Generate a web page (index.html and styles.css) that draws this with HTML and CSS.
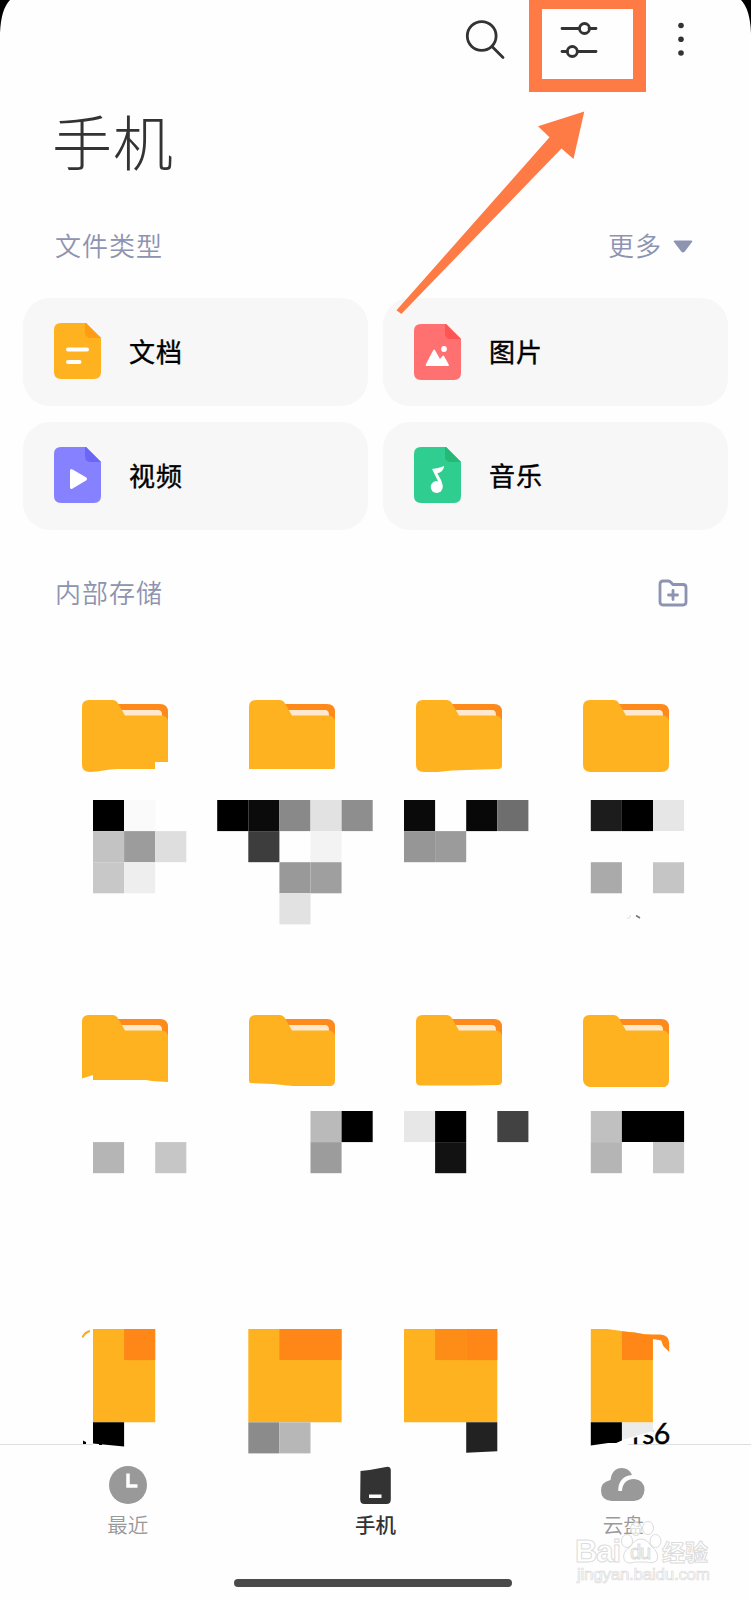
FILE: index.html
```html
<!DOCTYPE html>
<html lang="zh-CN">
<head>
    <meta charset="UTF-8">
    <meta name="viewport" content="width=device-width, initial-scale=1.0">
    <title>手机</title>
    <link rel="stylesheet" href="styles.css">
</head>
<body>
    <!-- Shared shapes -->
    <svg class="defs" width="0" height="0">
        <symbol id="sheet" viewBox="0 0 47 56">
            <path fill="currentColor" d="M7 0H32L47 15V49Q47 56 40 56H7Q0 56 0 49V7Q0 0 7 0Z"/>
        </symbol>
        <symbol id="folder-back" viewBox="0 0 86 72">
            <path fill="#fd8a1b" d="M30 4H78Q86 4 86 12V24H30Z"/>
            <path fill="#ffe8cc" d="M36 10H76Q80 10 80 15V18H36Z"/>
        </symbol>
    </svg>

    <div class="phone">
        <header class="toolbar">
            <svg class="search" width="42" height="42" viewBox="0 0 42 42">
                <circle cx="18.7" cy="18" r="14.4"/>
                <path d="M29 28.5L40 39.5"/>
            </svg>
            <svg class="sliders" width="37" height="36" viewBox="0 0 37 36">
                <path d="M2 7.5H19M29 7.5H36M2 30.5H7.5M17.500 30.5H36"/>
                <circle cx="24.5" cy="7.5" r="5"/>
                <circle cx="12.3" cy="30.5" r="5"/>
            </svg>
            <svg class="dots" width="6" height="34" viewBox="0 0 6 34">
                <circle cx="3" cy="3.5" r="2.8"/>
                <circle cx="3" cy="17.2" r="2.8"/>
                <circle cx="3" cy="31" r="2.8"/>
            </svg>
        </header>

        <h1>手机</h1>

        <!-- File types -->
        <div class="section-head">
            <span>文件类型</span>
            <span class="more"><span>更多</span>
                <svg width="20" height="13" viewBox="0 0 20 13"><path d="M2 .5H18Q20 .5 19 2L11.800 11.500Q10 13.300 8.200 11.500L1 2Q0 .5 2 .5Z"/></svg>
            </span>
        </div>
        <div class="types">
            <div class="card">
                <svg class="doc" width="47" height="56" viewBox="0 0 47 56">
                    <use href="#sheet"/>
                    <path fill="#ff9c14" d="M32 0L47 15H37Q31 15 31 9V0Z"/>
                    <path class="line" d="M14 26.500H33M14 39H25.500"/>
                </svg>
                <span>文档</span>
            </div>
            <div class="card">
                <svg class="pic" width="47" height="56" viewBox="0 0 47 56">
                    <use href="#sheet"/>
                    <path fill="#ff5454" d="M32 0L47 15H37Q31 15 31 9V0Z"/>
                    <path fill="#fff" d="M12.500 42Q11 42 12 40L19 26.500Q20 24.500 21.200 26.500L26 35L28.500 32Q29.500 31 30.300 32.500L35 41Q35.300 42 34 42Z"/>
                    <circle fill="#fff" cx="30" cy="25" r="2.900"/>
                </svg>
                <span>图片</span>
            </div>
            <div class="card">
                <svg class="video" width="47" height="56" viewBox="0 0 47 56">
                    <use href="#sheet"/>
                    <path fill="#6c66f5" d="M32 0L47 15H37Q31 15 31 9V0Z"/>
                    <path fill="#fff" d="M16 24Q16 21 18.600 22.500L32 30.300Q34 32 32 33.500L18.600 41.500Q16 43 16 40Z"/>
                </svg>
                <span>视频</span>
            </div>
            <div class="card">
                <svg class="music" width="47" height="56" viewBox="0 0 47 56">
                    <use href="#sheet"/>
                    <path fill="#26b876" d="M32 0L47 15H37Q31 15 31 9V0Z"/>
                    <circle fill="#fff" cx="22.700" cy="40" r="6"/>
                    <path fill="#fff" d="M30.300 19Q24 21.500 18 22L25 36L28.700 40Q28.500 36 27 33L23.300 26.200Q29 25.500 30.300 19Z"/>
                </svg>
                <span>音乐</span>
            </div>
        </div>

        <!-- Internal storage -->
        <div class="section-head storage">
            <span>内部存储</span>
            <svg class="new-folder" width="30" height="28" viewBox="0 0 30 28">
                <path d="M5 2H10Q12 2 13 3.500L15 5.500H25Q28 5.500 28 8.500V23Q28 26 25 26H5Q2 26 2 23V5Q2 2 5 2ZM15 11.500V20.500M10.500 16H19.500"/>
            </svg>
        </div>

        <div class="folders">
            <div class="item">
                <svg class="folder" width="86" height="72" viewBox="0 0 86 72">
                    <use href="#folder-back"/>
                    <path d="M7 0H31Q34 0 35.500 2.500L43 15.500H79Q85 15.500 86 21V62H73V69H36C25 69 18 72 8 72Q0 72 0 65V7Q0 0 7 0Z"/>
                </svg>
                <svg class="mosaic" width="167" height="124">
                    <g transform="translate(51) scale(31.1)">
                        <path fill="#000" d="M0 0h1v1h-1z"/>
                        <path fill="#fafafa" d="M1 0h1v1h-1z"/>
                        <path fill="#c3c3c3" d="M0 1h1v1h-1z"/>
                        <path fill="#9c9c9c" d="M1 1h1v1h-1z"/>
                        <path fill="#dedede" d="M2 1h1v1h-1z"/>
                        <path fill="#c8c8c8" d="M0 2h1v1h-1z"/>
                        <path fill="#eee" d="M1 2h1v1h-1z"/>
                    </g>
                </svg>
            </div>
            <div class="item">
                <svg class="folder" width="86" height="72" viewBox="0 0 86 72">
                    <use href="#folder-back"/>
                    <path d="M7 0H31Q34 0 35.500 2.500L43 15.500H79Q85 15.500 86 21V67L85 69H0V7Q0 0 7 0Z"/>
                </svg>
                <svg class="mosaic" width="167" height="124">
                    <g transform="translate(8.2) scale(31.1)">
                        <path fill="#000" d="M0 0h1v1h-1z"/>
                        <path fill="#0b0b0b" d="M1 0h1v1h-1z"/>
                        <path fill="#898989" d="M2 0h1v1h-1z"/>
                        <path fill="#e2e2e2" d="M3 0h1v1h-1z"/>
                        <path fill="#8e8e8e" d="M4 0h1v1h-1z"/>
                        <path fill="#3d3d3d" d="M1 1h1v1h-1z"/>
                        <path fill="#f3f3f3" d="M3 1h1v1h-1z"/>
                        <path fill="#999" d="M2 2h1v1h-1z"/>
                        <path fill="#9f9f9f" d="M3 2h1v1h-1z"/>
                        <path fill="#e2e2e2" d="M2 3h1v1h-1z"/>
                    </g>
                </svg>
            </div>
            <div class="item">
                <svg class="folder" width="86" height="72" viewBox="0 0 86 72">
                    <use href="#folder-back"/>
                    <path d="M7 0H31Q34 0 35.500 2.500L43 15.500H79Q85 15.500 86 21V66Q86 69 82 69C60 70 40 69.500 22 72H8Q0 72 0 65V7Q0 0 7 0Z"/>
                </svg>
                <svg class="mosaic" width="167" height="124">
                    <g transform="translate(28) scale(31.1)">
                        <path fill="#0a0a0a" d="M0 0h1v1h-1z"/>
                        <path fill="#080808" d="M2 0h1v1h-1z"/>
                        <path fill="#6e6e6e" d="M3 0h1v1h-1z"/>
                        <path fill="#969696" d="M0 1h1v1h-1z"/>
                        <path fill="#9b9b9b" d="M1 1h1v1h-1z"/>
                    </g>
                </svg>
            </div>
            <div class="item">
                <svg class="folder" width="86" height="72" viewBox="0 0 86 72">
                    <use href="#folder-back"/>
                    <path d="M7 0H31Q34 0 35.500 2.500L43 15.500H79Q85 15.500 86 21V65Q86 72 78 72H8Q0 72 0 65V7Q0 0 7 0Z"/>
                </svg>
                <svg class="mosaic" width="167" height="124">
                    <g transform="translate(47.8) scale(31.1)">
                        <path fill="#1c1c1c" d="M0 0h1v1h-1z"/>
                        <path fill="#000" d="M1 0h1v1h-1z"/>
                        <path fill="#e6e6e6" d="M2 0h1v1h-1z"/>
                        <path fill="#aaa" d="M0 2h1v1h-1z"/>
                        <path fill="#c5c5c5" d="M2 2h1v1h-1z"/>
                    </g>
                    <path class="scratch" d="M93 115.500L97 118"/>
                    <path class="scratch faint" d="M84 118Q88 119 87 115"/>
                </svg>
            </div>

            <div class="item">
                <svg class="folder" width="86" height="72" viewBox="0 0 86 72">
                    <use href="#folder-back"/>
                    <path d="M7 0H31Q34 0 35.500 2.500L43 15.500H79Q85 15.500 86 21V67L70 66L64 65H11V60L0 63.500V7Q0 0 7 0Z"/>
                </svg>
                <svg class="mosaic" width="167" height="124">
                    <g transform="translate(51) scale(31.1)">
                        <path fill="#b5b5b5" d="M0 1h1v1h-1z"/>
                        <path fill="#c6c6c6" d="M2 1h1v1h-1z"/>
                    </g>
                </svg>
            </div>
            <div class="item">
                <svg class="folder" width="86" height="72" viewBox="0 0 86 72">
                    <use href="#folder-back"/>
                    <path d="M7 0H31Q34 0 35.500 2.500L43 15.500H79Q85 15.500 86 21V65Q86 71 81 71H44L24 69L1 68L0 66V7Q0 0 7 0Z"/>
                </svg>
                <svg class="mosaic" width="167" height="124">
                    <g transform="translate(8.2) scale(31.1)">
                        <path fill="#bababa" d="M3 0h1v1h-1z"/>
                        <path fill="#000" d="M4 0h1v1h-1z"/>
                        <path fill="#9c9c9c" d="M3 1h1v1h-1z"/>
                    </g>
                </svg>
            </div>
            <div class="item">
                <svg class="folder" width="86" height="72" viewBox="0 0 86 72">
                    <use href="#folder-back"/>
                    <path d="M7 0H31Q34 0 35.500 2.500L43 15.500H79Q85 15.500 86 21V66Q86 70 82 70L56 70.500H4Q0 70 0 66V7Q0 0 7 0Z"/>
                </svg>
                <svg class="mosaic" width="167" height="124">
                    <g transform="translate(28) scale(31.1)">
                        <path fill="#e7e7e7" d="M0 0h1v1h-1z"/>
                        <path fill="#000" d="M1 0h1v1h-1z"/>
                        <path fill="#424242" d="M3 0h1v1h-1z"/>
                        <path fill="#121212" d="M1 1h1v1h-1z"/>
                    </g>
                </svg>
            </div>
            <div class="item">
                <svg class="folder" width="86" height="72" viewBox="0 0 86 72">
                    <use href="#folder-back"/>
                    <path d="M7 0H31Q34 0 35.500 2.500L43 15.500H79Q85 15.500 86 21V65Q86 72.500 78 72.500H10Q0 72 0 64V7Q0 0 7 0Z"/>
                </svg>
                <svg class="mosaic" width="167" height="124">
                    <g transform="translate(47.8) scale(31.1)">
                        <path fill="#c0c0c0" d="M0 0h1v1h-1z"/>
                        <path fill="#000" d="M1 0h2v1h-2z"/>
                        <path fill="#b5b5b5" d="M0 1h1v1h-1z"/>
                        <path fill="#c6c6c6" d="M2 1h1v1h-1z"/>
                    </g>
                </svg>
            </div>

            <!-- Last row runs under the tab bar -->
            <div class="item">
                <svg class="mosaic" width="167" height="115">
                    <path fill="none" stroke="#f5ac22" stroke-width="2" d="M40.500 8.500Q42.500 3.500 48 2"/>
                    <g transform="translate(51) scale(31.1)">
                        <path fill="#ffb21f" d="M0 0h2v3h-2z"/>
                        <path fill="#ff8717" d="M1 0h1v1h-1z"/>
                        <path fill="#000" d="M0 3h1v.780L0 3.680z"/>
                    </g>
                    <path fill="#000" d="M41 111.500L44 113V115H41ZM57 113H60V116H57Z"/>
                </svg>
            </div>
            <div class="item">
                <svg class="mosaic" width="167" height="115">
                    <g transform="translate(39.3) scale(31.1)">
                        <path fill="#ffb21f" d="M0 0h3v3h-3z"/>
                        <path fill="#ff8717" d="M1 0h2v1h-2z"/>
                        <path fill="#8b8b8b" d="M0 3h1v1h-1z"/>
                        <path fill="#b7b7b7" d="M1 3h1v1h-1z"/>
                    </g>
                </svg>
            </div>
            <div class="item">
                <svg class="mosaic" width="167" height="115">
                    <g transform="translate(28) scale(31.1)">
                        <path fill="#ffb21f" d="M0 0h3v3h-3z"/>
                        <path fill="#fd8d16" d="M1 0h1v1h-1z"/>
                        <path fill="#ff8717" d="M2 0h1v1h-1z"/>
                        <path fill="#222" d="M2 3h1v.930L2 3.980z"/>
                    </g>
                </svg>
            </div>
            <div class="item">
                <svg class="mosaic" width="167" height="115">
                    <g transform="translate(-.8)">
                        <text x="90" y="114.500" textLength="38">rs6</text>
                        <path fill="#fefefe" d="M80 90H110.700V104L79.700 112Z"/>
                        <path fill="#ebebeb" d="M79.700 93.300H110.700V102L79.700 111Z"/>
                        <path fill="#ffb21f" d="M48.600 0H65L79.700 2L102 5L110.700 6V93.300H48.600Z"/>
                        <path fill="#ff8717" d="M79.700 2.500L93 3.500L102 5.500H118Q127 6 127 14V23L121 17L119 11.500L110.700 10V31H79.700Z"/>
                        <path fill="#000" d="M48.600 93.300H79.700V111.500L74 114H66L48.600 116.500Z"/>
                    </g>
                </svg>
            </div>
        </div>

        <nav class="tabs">
            <div class="tab">
                <svg width="44" height="38" viewBox="0 0 44 38">
                    <circle fill="#999" cx="22" cy="19" r="19"/>
                    <path class="hands" d="M22 7.500V20H31.500"/>
                </svg>
                <span>最近</span>
            </div>
            <div class="tab active">
                <svg width="44" height="38" viewBox="0 0 44 38">
                    <path fill="#333" d="M7.500 5L16.500 4L34.500 .7Q37.500 .7 37.800 4V33.500Q37.800 38 33.500 38H11.500Q7.200 38 7.200 33.500Z"/>
                    <path fill="#fff" d="M16 28.500H28.500V32H16Z"/>
                </svg>
                <span>手机</span>
            </div>
            <div class="tab">
                <svg width="44" height="38" viewBox="0 0 44 38">
                    <path fill="#999" d="M10.500 35Q0 34 0 24.500Q0 16 9.500 14Q11 2 21 2Q28 2 31 9Q24 9.500 20.500 14Q17 18 17.300 25H21C21.500 17 26 13 33 13Q43.500 14 43.500 24Q43 34 33 35Z"/>
                </svg>
                <span>云盘</span>
            </div>
        </nav>
        <div class="home-bar"></div>

        <!-- Screen corners -->
        <svg class="corner left" width="10" height="34" viewBox="0 0 10 34"><path d="M0 0H10Q1 9 0 33Z"/></svg>
        <svg class="corner right" width="10" height="34" viewBox="0 0 10 34"><path d="M10 0H0Q9 9 10 33Z"/></svg>

        <!-- Highlight box and arrow -->
        <div class="highlight"></div>
        <svg class="arrow" width="190" height="204" viewBox="0 0 190 204">
            <path d="M188.300 1.500L142 16.300L153.500 27.300L.5 200.300L5.300 204L165.500 38.500L177.500 49Z"/>
        </svg>

        <!-- Watermark -->
        <svg class="watermark" width="142" height="72" viewBox="0 0 142 72">
            <g class="paw">
                <ellipse cx="57" cy="28" rx="5.500" ry="6.500"/>
                <ellipse cx="66" cy="16" rx="5.500" ry="6.500"/>
                <ellipse cx="78" cy="15" rx="5.500" ry="6.500"/>
                <ellipse cx="85.500" cy="28" rx="5.500" ry="6.500"/>
                <path d="M71 26Q77 26 81 33Q90 40 87 47Q84 51 76 49H65Q56 52 54 46Q52 39 60 34Q65 26 71 26Z"/>
            </g>
            <text class="latin" x="5" y="49" textLength="46">Bai</text>
            <text class="du" x="60" y="46" textLength="21">du</text>
            <text class="cjk" x="92" y="48" textLength="46">经验</text>
            <text class="url" x="7" y="67" textLength="133">jingyan.baidu.com</text>
        </svg>
    </div>
</body>
</html>
```

FILE: styles.css
```css
* {
    box-sizing: border-box;
}
body {
    margin: 0;
    background-color: #fefefe;
    font-family: "Noto Sans CJK SC", sans-serif;
    color: #000;
}
.defs {
    position: absolute;
}
.phone {
    position: relative;
    width: 751px;
    height: 1600px;
    overflow: hidden;
}

/* Toolbar */
.toolbar {
    display: flex;
    justify-content: flex-end;
    align-items: center;
    height: 78px;
    padding-right: 67px;
}
.search,
.sliders {
    overflow: visible;
    fill: none;
    stroke: #333;
    stroke-width: 2.8;
    stroke-linecap: round;
}
.search {
    margin-right: 55px;
}
.sliders {
    margin-right: 81px;
}
.dots {
    fill: #333;
}
h1 {
    margin: 0;
    padding-left: 52px;
    height: 128px;
    line-height: 124px;
    font-size: 60px;
    font-weight: 300;
    letter-spacing: 1px;
    color: #333;
}

/* Section titles */
.section-head {
    display: flex;
    justify-content: space-between;
    align-items: center;
    height: 76px;
    padding: 0 58px 0 55px;
    font-size: 26px;
    font-weight: 350;
    letter-spacing: 1px;
    color: #8d93b0;
}
.more {
    display: flex;
    align-items: center;
    gap: 11px;
}
.more svg {
    margin-top: 5px;
    fill: #8d93b0;
}
.storage {
    margin-top: 23px;
    padding-right: 63px;
}
.new-folder {
    margin-top: 3px;
    fill: none;
    stroke: #8d93b0;
    stroke-width: 2.8;
    stroke-linecap: round;
}

/* File type cards */
.types {
    display: grid;
    grid-template-columns: 1fr 1fr;
    gap: 16px 15px;
    margin-top: 16px;
    padding: 0 23px;
}
.card {
    display: flex;
    align-items: center;
    gap: 28px;
    height: 108px;
    padding: 0 0 3px 31px;
    border-radius: 27px;
    background-color: #f7f7f7;
    font-size: 26px;
    letter-spacing: 1px;
    -webkit-text-stroke: 0.4px #000;
}
.doc {
    color: #ffb21f;
}
.pic {
    margin-top: 2px;
    color: #ff7070;
}
.video {
    color: #8581ff;
}
.music {
    color: #2fcd8f;
}
.line,
.hands {
    fill: none;
    stroke: #fff;
    stroke-width: 4;
}
.line {
    stroke-linecap: round;
}
.hands {
    stroke-width: 3.5;
}

/* Folder grid */
.folders {
    display: grid;
    grid-template-columns: repeat(4, 167px);
    grid-template-rows: 314px 315px 115px;
    justify-content: center;
    margin-top: 71px;
}
.item {
    display: flex;
    flex-direction: column;
    align-items: center;
}
.item:nth-child(n+5):nth-child(-n+8) {
    padding-top: 1px;
}
.folder {
    fill: #ffb21f;
}
.mosaic {
    position: relative;
    z-index: 1;
    overflow: visible;
}
.folder + .mosaic {
    margin-top: 28px;
}
.item:nth-child(n+5) .folder + .mosaic {
    margin-top: 24px;
}
.mosaic text {
    font-family: Lato, sans-serif;
    font-size: 28.5px;
    stroke: #000;
    stroke-width: 0.4;
}
.scratch {
    fill: none;
    stroke: #777;
    stroke-width: 1.5;
}
.faint {
    stroke: #ddd;
    stroke-width: 1;
}

/* Tab bar, the divider is broken in the middle */
.tabs {
    display: grid;
    grid-template-columns: repeat(3, 1fr);
    height: 135px;
    padding: 22px 4px 0;
    background: linear-gradient(to right, #dedede 93px, transparent 93px, transparent 628px, #dedede 628px) top / 100% 1px no-repeat;
}
.tab {
    display: flex;
    flex-direction: column;
    align-items: center;
    font-size: 20.5px;
    font-weight: 350;
    line-height: 40px;
    color: #999;
}
.active {
    font-weight: 500;
    color: #333;
}
.home-bar {
    width: 278px;
    height: 8px;
    margin-left: 234px;
    border-radius: 4px;
    background-color: #4a4a4a;
}

/* Overlays */
.corner {
    position: absolute;
    top: 0;
}
.left {
    left: 0;
}
.right {
    right: 0;
}
.highlight {
    position: absolute;
    top: 0;
    left: 529px;
    width: 117px;
    height: 92px;
    border: 13px solid #ff7b45;
    border-top-width: 9px;
}
.arrow {
    position: absolute;
    top: 110px;
    left: 396px;
    fill: #ff7b45;
}
.watermark {
    position: absolute;
    top: 1513px;
    left: 570px;
    z-index: 2;
    fill: #fff;
    stroke: #dcdcdc;
    stroke-width: 1;
}
.paw {
    fill-opacity: 0.7;
}
.latin,
.du,
.url {
    font-family: "Liberation Sans", sans-serif;
}
.latin {
    font-size: 31px;
    font-weight: bold;
}
.du {
    font-size: 20px;
}
.cjk {
    font-size: 23px;
    font-weight: bold;
}
.url {
    font-size: 17px;
    stroke-width: 0.7;
}
```
